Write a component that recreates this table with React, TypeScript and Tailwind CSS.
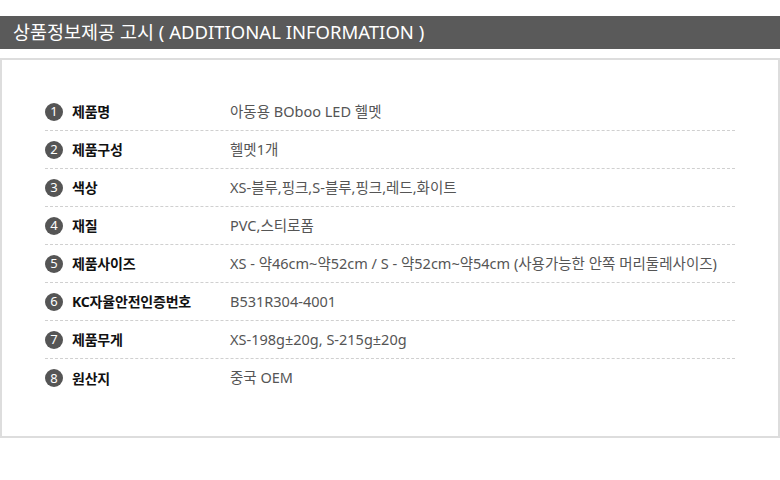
import React from "react";

const rows: [string, string][] = [
  ["제품명", "아동용 BOboo LED 헬멧"],
  ["제품구성", "헬멧1개"],
  ["색상", "XS-블루,핑크,S-블루,핑크,레드,화이트"],
  ["재질", "PVC,스티로폼"],
  ["제품사이즈", "XS - 약46cm~약52cm / S - 약52cm~약54cm (사용가능한 안쪽 머리둘레사이즈)"],
  ["KC자율안전인증번호", "B531R304-4001"],
  ["제품무게", "XS-198g±20g, S-215g±20g"],
  ["원산지", "중국 OEM"],
];

export default function App() {
  return (
    <div
      className="w-[780px] h-[480px] bg-white overflow-hidden"
      style={{ fontFamily: '"Noto Sans", "Noto Sans CJK KR", sans-serif' }}
    >
      <div className="h-4" />
      <div className="h-[33px] bg-[#5a5a5a] flex items-center pl-[13px]">
        <span className="text-white text-[18.5px] leading-none">
          상품정보제공 고시 ( ADDITIONAL INFORMATION )
        </span>
      </div>
      <div className="mt-[9px] h-[380px] border-2 border-[#dddddd] pt-[33px] px-[43px]">
        {rows.map(([label, value], i) => (
          <div
            key={i}
            className={
              "h-[38px] flex items-center " +
              (i < rows.length - 1 ? "border-b border-dashed border-[#d0d0d0]" : "")
            }
          >
            <div className="w-[18px] h-[18px] rounded-full bg-[#555555] text-white text-[13px] leading-none flex items-center justify-center shrink-0">
              {i + 1}
            </div>
            <div className="ml-[9px] w-[158px] text-[14px] font-bold text-[#111111] tracking-[-0.2px]">
              {label}
            </div>
            <div className="text-[14.5px] text-[#555555]">{value}</div>
          </div>
        ))}
      </div>
    </div>
  );
}
